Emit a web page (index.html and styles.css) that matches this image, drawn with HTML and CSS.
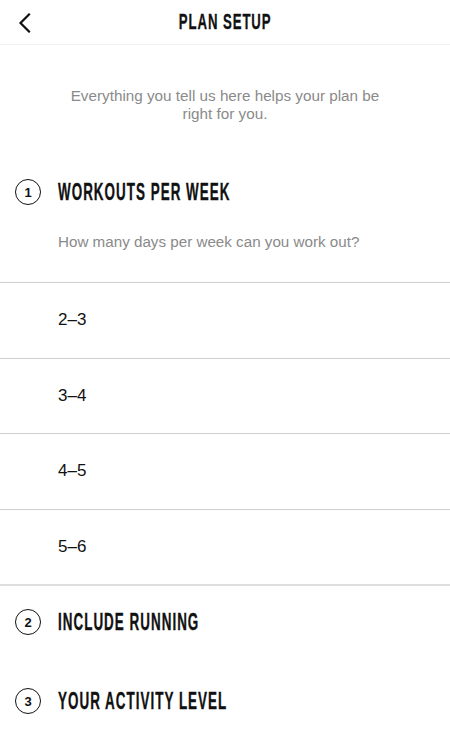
FILE: index.html
```html
<!DOCTYPE html>
<html lang="en">
<head>
<meta charset="utf-8">
<title>Plan Setup</title>
<link rel="stylesheet" href="styles.css">
</head>
<body>
<header class="topbar">
  <button class="back" aria-label="Back">
    <svg width="14" height="20" viewBox="0 0 14 20"><path d="M11 1.5 L2.5 10 L11 18.5" fill="none" stroke="#111" stroke-width="2.2" stroke-linecap="square"/></svg>
  </button>
  <h1 class="title"><span class="cond">PLAN SETUP</span></h1>
  <span class="spacer"></span>
</header>
<main class="content">
  <p class="intro">Everything you tell us here helps your plan be<br>right for you.</p>

  <section class="step step-open">
    <div class="step-head">
      <span class="num">1</span>
      <h2 class="step-title"><span class="cond">WORKOUTS PER WEEK</span></h2>
    </div>
    <p class="question">How many days per week can you work out?</p>
    <ul class="options">
      <li class="option">2–3</li>
      <li class="option">3–4</li>
      <li class="option">4–5</li>
      <li class="option">5–6</li>
    </ul>
  </section>

  <section class="step step-two">
    <div class="step-head">
      <span class="num">2</span>
      <h2 class="step-title"><span class="cond">INCLUDE RUNNING</span></h2>
    </div>
  </section>

  <section class="step step-three">
    <div class="step-head">
      <span class="num">3</span>
      <h2 class="step-title"><span class="cond">YOUR ACTIVITY LEVEL</span></h2>
    </div>
  </section>
</main>
</body>
</html>
```
FILE: styles.css
```css
* { box-sizing: border-box; }
html, body { margin: 0; padding: 0; background: #fff; }
body {
  width: 450px;
  font-family: "Liberation Sans", Arial, sans-serif;
  color: #111;
}
.topbar {
  height: 45px;
  display: grid;
  grid-template-columns: 60px 1fr 60px;
  align-items: center;
  border-bottom: 1px solid #f1f1f1;
}
.back {
  border: 0;
  background: none;
  padding: 0 0 0 18px;
  height: 44px;
  display: flex;
  align-items: center;
  cursor: pointer;
}
.back svg { display: block; margin-top: 1px; }
.title {
  margin: 0;
  text-align: center;
  font-family: "Liberation Sans", sans-serif;
  font-weight: 700;
  font-size: 22px;
  line-height: 40px;
  color: #111;
}
.title .cond {
  display: inline-block;
  transform: scaleX(0.6);
  letter-spacing: 1.5px;
  -webkit-text-stroke: 0.3px #111;
}
.content { padding: 0; }
.intro {
  margin: 0;
  padding: 42px 20px 0;
  text-align: center;
  font-size: 15.25px;
  line-height: 18px;
  color: #8a8a8a;
}
.step-head {
  display: flex;
  align-items: center;
  gap: 17px;
  padding-left: 15px;
  height: 26px;
}
.step-open { margin-top: 56px; }
.num {
  width: 26px;
  height: 26px;
  border: 1.5px solid #111;
  border-radius: 50%;
  display: flex;
  align-items: center;
  justify-content: center;
  font-size: 13px;
  font-weight: 700;
  color: #111;
  flex: none;
}
.step-title {
  margin: 0;
  font-family: "Liberation Sans", sans-serif;
  font-weight: 700;
  font-size: 24px;
  line-height: 26px;
  white-space: nowrap;
}
.step-title .cond {
  display: inline-block;
  transform: scaleX(0.56);
  transform-origin: left center;
  letter-spacing: 1.8px;
  -webkit-text-stroke: 0.35px #111;
}
.question {
  margin: 28px 0 0;
  padding-left: 58px;
  font-size: 15.2px;
  line-height: 18px;
  color: #8a8a8a;
}
.options {
  list-style: none;
  margin: 31px 0 0;
  padding: 0;
  border-bottom: 2px solid #dedede;
}
.option {
  height: 75.5px;
  border-top: 1px solid #cfcfcf;
  padding-left: 58px;
  display: flex;
  align-items: center;
  font-size: 17px;
  color: #111;
}
.step-two { margin-top: 23px; }
.step-three { margin-top: 53px; }
```
